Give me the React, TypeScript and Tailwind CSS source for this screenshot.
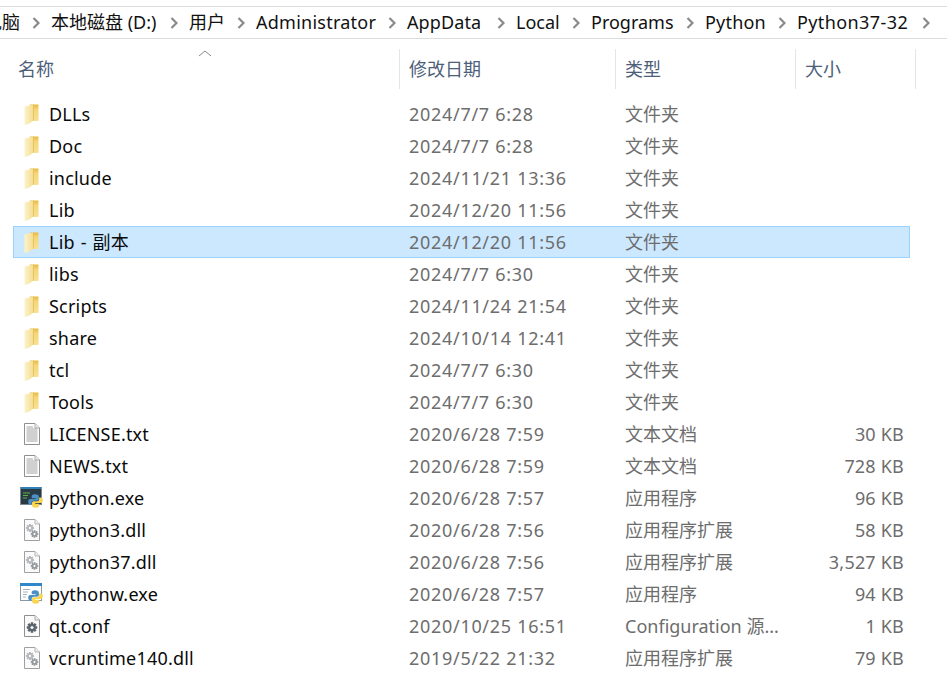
const FONT = "font-['Noto_Sans','Noto_Sans_CJK_SC',sans-serif]";

function Chevron() {
  return (
    <svg width="8" height="12" viewBox="0 0 8 12" className="shrink-0">
      <path d="M1.5 1 L6.5 6 L1.5 11" fill="none" stroke="#8a8a8a" strokeWidth="2.2" />
    </svg>
  );
}

function Folder() {
  return (
    <svg width="15" height="21" viewBox="0 0 15 21">
      <defs>
        <linearGradient id="fg" x1="0" y1="0" x2="1" y2="0">
          <stop offset="0" stopColor="#fdf3c8" />
          <stop offset="1" stopColor="#f4dc92" />
        </linearGradient>
        <linearGradient id="fb" x1="0" y1="0" x2="0" y2="1">
          <stop offset="0" stopColor="#e8b93f" />
          <stop offset="0.3" stopColor="#f5d675" />
          <stop offset="1" stopColor="#f9e094" />
        </linearGradient>
      </defs>
      <path d="M6 0.5 H14.5 V17 H6 Z" fill="url(#fb)" />
      <path d="M0.5 2.5 L9.5 0.5 V16.5 L3.5 20.5 H0.5 Z" fill="url(#fg)" />
      <path d="M9.5 0.5 V16.5" stroke="#e2bc58" strokeWidth="0.8" />
    </svg>
  );
}

function TextFile() {
  return (
    <svg width="18" height="22" viewBox="0 0 18 22">
      <path d="M1.5 0.5 H12 L16.5 5 V21.5 H1.5 Z" fill="#fff" stroke="#8f8f8f" />
      <path d="M12 0.5 V5 H16.5" fill="#eeeeee" stroke="#a8a8a8" />
      <path d="M3.5 4 H10 M3.5 6 H14.5 M3.5 8 H14.5 M3.5 10 H14.5 M3.5 12 H14.5 M3.5 14 H14.5 M3.5 16 H14.5 M3.5 18 H14.5" stroke="#a2a2a2" strokeWidth="1" />
    </svg>
  );
}

function Gear({ cx, cy, r, color }: { cx: number; cy: number; r: number; color: string }) {
  const teeth = [0, 45, 90, 135];
  return (
    <g>
      {teeth.map((a) => (
        <rect key={a} x={cx - r * 0.3} y={cy - r * 1.25} width={r * 0.6} height={r * 2.5} fill={color} transform={`rotate(${a} ${cx} ${cy})`} />
      ))}
      <circle cx={cx} cy={cy} r={r * 0.85} fill={color} />
      <circle cx={cx} cy={cy} r={r * 0.38} fill="#f4f4f4" />
    </g>
  );
}

function DllFile() {
  return (
    <svg width="18" height="22" viewBox="0 0 18 22">
      <path d="M1.5 0.5 H12 L16.5 5 V21.5 H1.5 Z" fill="#fafafa" stroke="#a0a0a0" />
      <path d="M12 0.5 V5 H16.5" fill="#eeeeee" stroke="#b5b5b5" />
      <Gear cx={7} cy={9} r={3.2} color="#b4b8bc" />
      <Gear cx={11.5} cy={15} r={3} color="#93999e" />
    </svg>
  );
}

function ConfFile() {
  return (
    <svg width="18" height="22" viewBox="0 0 18 22">
      <path d="M1.5 0.5 H12 L16.5 5 V21.5 H1.5 Z" fill="#fafafa" stroke="#8f8f8f" />
      <path d="M12 0.5 V5 H16.5" fill="#eeeeee" stroke="#aaa" />
      <Gear cx={9} cy={12.5} r={4.2} color="#59636b" />
    </svg>
  );
}

function PySnake() {
  return (
    <g transform="translate(2.2 -0.8)">
      <path d="M13 8 C10 8 9.5 9.2 9.5 10.5 V12 H13.5 V12.7 H8 C6.5 12.7 6 14 6 15.5 C6 17 6.6 18.2 8 18.2 H9.5 V16.5 C9.5 15.2 10.5 14.5 11.5 14.5 H15 C16 14.5 16.7 13.8 16.7 12.8 V10.5 C16.7 9 15.5 8 13 8 Z" fill="#4b8fc7" />
      <path d="M13.5 21.5 C16.5 21.5 17 20.3 17 19 V17.5 H13 V16.8 H18.5 C20 16.8 20.7 15.5 20.7 14 C20.7 12.5 20 11.3 18.5 11.3 H17 V13 C17 14.3 16 15 15 15 H11.5 C10.5 15 9.8 15.7 9.8 16.7 V19 C9.8 20.5 11 21.5 13.5 21.5 Z" fill="#f9d552" />
    </g>
  );
}

function PyExe() {
  return (
    <svg width="23" height="23" viewBox="0 0 23 23">
      <rect x="0" y="0" width="22" height="18" fill="#7d8a94" />
      <rect x="1" y="1" width="20" height="16" fill="#2a3a44" />
      <rect x="1" y="0" width="20" height="2" fill="#2f7fb8" />
      <path d="M3 6 H10 M3 8.5 H8 M3 11 H7" stroke="#5fb04a" strokeWidth="1" />
      <PySnake />
    </svg>
  );
}

function PywExe() {
  return (
    <svg width="23" height="23" viewBox="0 0 23 23">
      <rect x="0.5" y="0.5" width="21" height="17" fill="#fff" stroke="#8b98a3" />
      <rect x="0" y="0" width="22" height="3" fill="#2f87c9" />
      <path d="M3 6.5 H10 M3 9 H8 M3 11.5 H7 M3 14 H6" stroke="#aab2b9" strokeWidth="1" />
      <PySnake />
    </svg>
  );
}

const F = <Folder />;
const rows = [
  { icon: F, name: "DLLs", date: "2024/7/7 6:28", type: "文件夹", size: "" },
  { icon: F, name: "Doc", date: "2024/7/7 6:28", type: "文件夹", size: "" },
  { icon: F, name: "include", date: "2024/11/21 13:36", type: "文件夹", size: "" },
  { icon: F, name: "Lib", date: "2024/12/20 11:56", type: "文件夹", size: "" },
  { icon: F, name: "Lib - 副本", date: "2024/12/20 11:56", type: "文件夹", size: "", selected: true },
  { icon: F, name: "libs", date: "2024/7/7 6:30", type: "文件夹", size: "" },
  { icon: F, name: "Scripts", date: "2024/11/24 21:54", type: "文件夹", size: "" },
  { icon: F, name: "share", date: "2024/10/14 12:41", type: "文件夹", size: "" },
  { icon: F, name: "tcl", date: "2024/7/7 6:30", type: "文件夹", size: "" },
  { icon: F, name: "Tools", date: "2024/7/7 6:30", type: "文件夹", size: "" },
  { icon: <TextFile />, name: "LICENSE.txt", date: "2020/6/28 7:59", type: "文本文档", size: "30 KB" },
  { icon: <TextFile />, name: "NEWS.txt", date: "2020/6/28 7:59", type: "文本文档", size: "728 KB" },
  { icon: <PyExe />, name: "python.exe", date: "2020/6/28 7:57", type: "应用程序", size: "96 KB" },
  { icon: <DllFile />, name: "python3.dll", date: "2020/6/28 7:56", type: "应用程序扩展", size: "58 KB" },
  { icon: <DllFile />, name: "python37.dll", date: "2020/6/28 7:56", type: "应用程序扩展", size: "3,527 KB" },
  { icon: <PywExe />, name: "pythonw.exe", date: "2020/6/28 7:57", type: "应用程序", size: "94 KB" },
  { icon: <ConfFile />, name: "qt.conf", date: "2020/10/25 16:51", type: "Configuration 源...", size: "1 KB" },
  { icon: <DllFile />, name: "vcruntime140.dll", date: "2019/5/22 21:32", type: "应用程序扩展", size: "79 KB" },
];

const crumbs = [
  { text: "本地磁盘 (D:)", cls: "w-[107px]" },
  { text: "用户", cls: "w-[36px]" },
  { text: "Administrator", cls: "w-[120px] tracking-[0.25px]" },
  { text: "AppData", cls: "w-[78px] tracking-[0.1px]" },
  { text: "Local", cls: "w-[44px]" },
  { text: "Programs", cls: "w-[83px]" },
  { text: "Python", cls: "w-[61px] tracking-[0.2px]" },
  { text: "Python37-32", cls: "w-[113px] tracking-[0.4px]" },
];

export default function App() {
  return (
    <div className={`${FONT} w-[947px] h-[695px] overflow-hidden bg-white pt-[6px] text-[18px]`}>
      <div className="h-[33px] border-y border-[#dcdcdc] flex items-center text-[#111] overflow-hidden">
        <div className="flex items-center gap-[11px] -ml-[16px]">
          <div className="flex items-center gap-[12px] whitespace-nowrap">
            <span className="w-[36px]">电脑</span>
            <Chevron />
          </div>
          {crumbs.map((c) => (
            <div key={c.text} className="flex items-center gap-[12px] whitespace-nowrap">
              <span className={c.cls}>{c.text}</span>
              <Chevron />
            </div>
          ))}
        </div>
      </div>

      <div className="relative h-[50px] pt-[10px] flex text-[#4c607a]">
        <svg width="14" height="7" viewBox="0 0 14 7" className="absolute left-[198px] top-[11px]">
          <path d="M1 6 L7 1 L13 6" fill="none" stroke="#8a8a8a" />
        </svg>
        <div className="w-[400px] h-[40px] pl-[18px] flex items-center border-r border-[#e5e5e5]">名称</div>
        <div className="w-[216px] h-[40px] pl-[9px] flex items-center border-r border-[#e5e5e5]">修改日期</div>
        <div className="w-[180px] h-[40px] pl-[9px] flex items-center border-r border-[#e5e5e5]">类型</div>
        <div className="w-[120px] h-[40px] pl-[9px] flex items-center border-r border-[#e5e5e5]">大小</div>
      </div>

      <div className="ml-[13px] w-[897px] pt-[9px]">
        {rows.map((r) => (
          <div
            key={r.name}
            className={`h-[32px] flex items-center border ${r.selected ? "bg-[#cce8ff] border-[#99d1ff]" : "border-transparent"}`}
          >
            <div className="w-[35px] flex items-center justify-center shrink-0">{r.icon}</div>
            <div className="w-[360px] text-[#0a0a0a] whitespace-nowrap tracking-[0.2px] [word-spacing:1px]">{r.name}</div>
            <div className="w-[216px] text-[#6d6d6d] whitespace-nowrap tracking-[0.7px]">{r.date}</div>
            <div className="w-[174px] text-[#6d6d6d] whitespace-nowrap">{r.type}</div>
            <div className="w-[105px] text-[#6d6d6d] text-right whitespace-nowrap tracking-[0.2px]">{r.size}</div>
          </div>
        ))}
      </div>
    </div>
  );
}
